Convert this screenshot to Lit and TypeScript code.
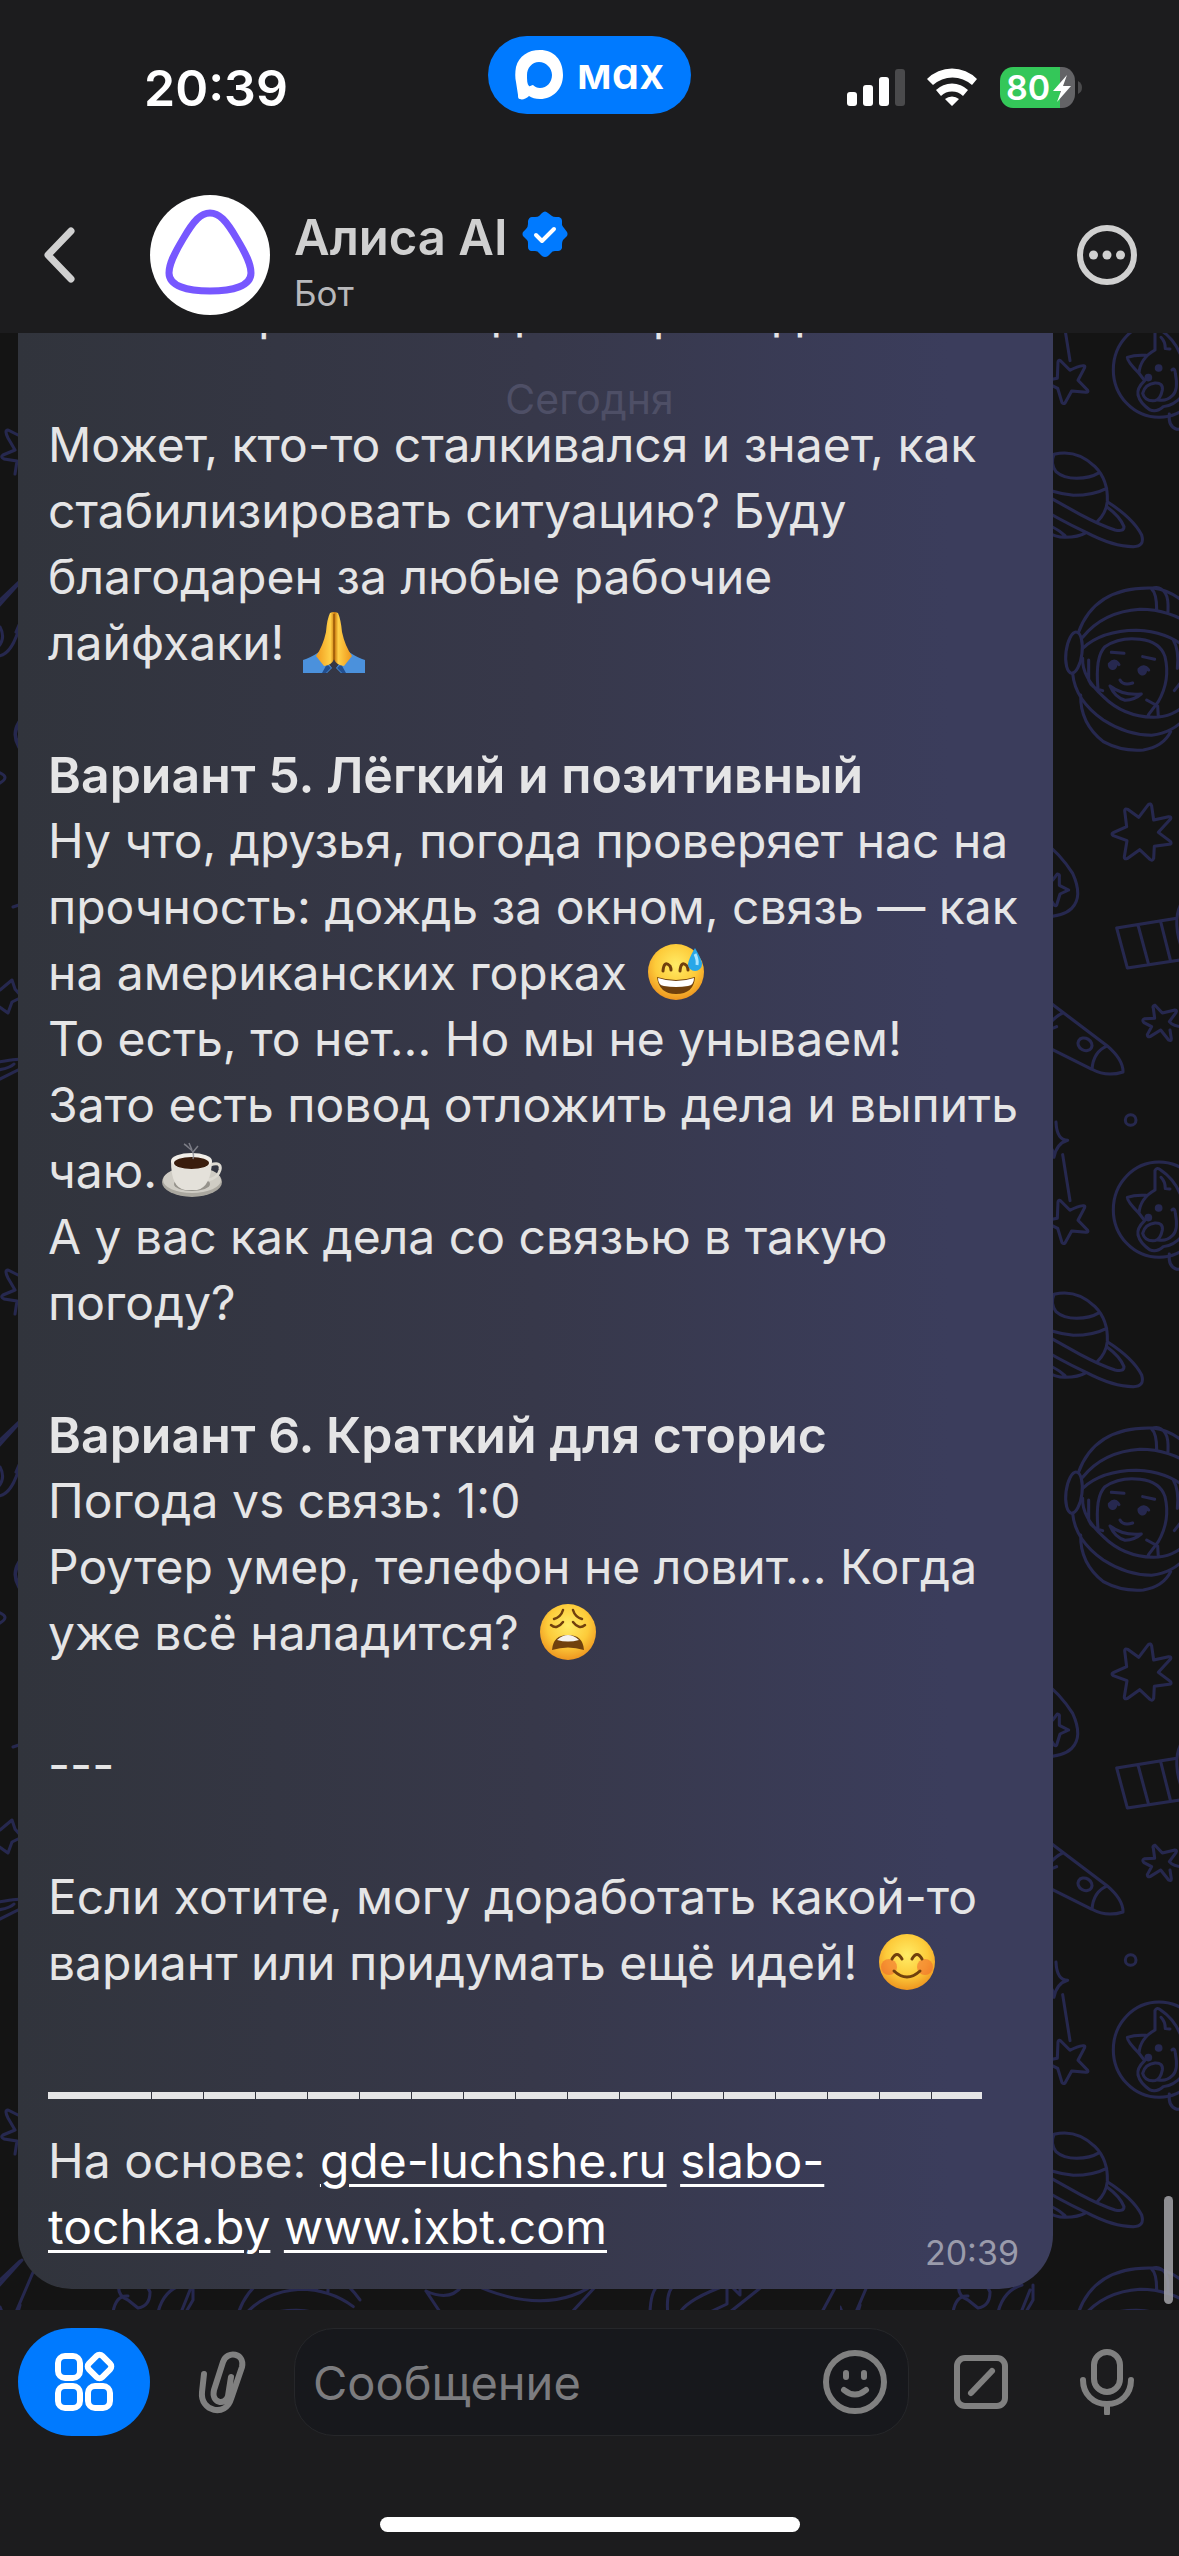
import { LitElement, html, css, svg } from "lit";
import { customElement } from "lit/decorators.js";

const star5 = svg`<path d="M60 122L90 152Q112 140 130 138Q136 138 134 144L114 182L143 212Q146 218 138 218L95 214L75 250Q70 254 66 249L53 206L20 190Q14 186 20 182L52 176L54 128Q55 120 60 122Z"/>`;

@customElement("space-wallpaper")
export class SpaceWallpaper extends LitElement {
  static styles = css`
    :host { display: block; }
    .canvas { display: block; width: 100%; height: 100%; }
    .ink { fill: none; stroke: #26284f; stroke-width: 9; stroke-linecap: round; stroke-linejoin: round; }
    .thin { stroke-width: 3; }
    .dot { fill: #26284f; }
  `;

  render() {
    return html`<svg class="canvas" aria-hidden="true">
      <defs>
        <pattern id="space" patternUnits="userSpaceOnUse" x="840" y="-63" width="840" height="840">
          <g class="ink" transform="translate(-840 -270)">
            <g transform="translate(1040 -40) scale(.3333)">
              <circle cx="272" cy="960" r="16"/>
              <path d="M48 966Q50 1020 83 1021Q50 1030 42 1072Q40 1035 5 1025M68 1064L90 1202"/>
              <g transform="translate(0 1079)">${star5}</g>
              <ellipse cx="357" cy="1229" rx="137" ry="143"/>
              <path d="M345 1170L345 1112Q350 1100 362 1110Q400 1135 420 1180M345 1170Q300 1195 297 1240Q262 1205 262 1192Q285 1184 318 1186M297 1240L314 1262Q290 1285 294 1305Q300 1330 330 1350Q350 1358 370 1340Q400 1338 430 1305M396 1230Q405 1222 406 1240Q416 1290 398 1306Q380 1325 355 1320M308 1300Q315 1272 345 1269Q370 1268 367 1290Q362 1318 345 1322Q315 1325 308 1300ZM363 1132Q376 1145 376 1166L390 1167M388 1362Q384 1400 410 1408H430"/>
              <circle class="dot" cx="356" cy="1224" r="7"/><circle class="dot" cx="325" cy="1253" r="7"/>
            </g>
            <g transform="translate(1040 320) scale(.3333)">
              <path d="M-30 500Q-40 415 42 403Q110 386 165 440Q205 480 202 545Q198 580 172 605M42 403Q30 430 48 455Q70 475 110 475Q150 475 178 458M-20 490Q40 520 100 526Q160 526 200 505M202 545Q280 595 305 645Q315 680 280 680Q220 680 140 638Q50 595 -30 545M202 562Q240 590 252 620Q252 636 225 630Q180 615 120 583L-20 505M-20 590Q15 650 75 652Q115 652 138 638M-10 605Q45 618 75 647"/>
              <path d="M115 938Q165 798 340 804Q420 815 480 900M128 952Q190 875 300 868Q390 868 460 920M128 985Q185 932 290 931Q380 934 440 985M350 868Q350 820 334 806Q360 795 376 820Q386 835 384 874"/>
              <ellipse cx="102" cy="998" rx="24" ry="62" transform="rotate(7 102 998)"/>
              <path d="M128 1015Q125 1070 190 1130Q250 1190 340 1192Q400 1192 440 1150M98 1060Q105 1140 190 1200Q260 1245 335 1246Q400 1238 440 1190M122 1125Q120 1210 190 1265Q245 1295 310 1290Q370 1280 392 1235M146 1020L146 1080Q155 1105 188 1112M174 1106Q165 1010 195 980Q240 950 300 958Q360 965 375 1010Q392 1080 355 1145L325 1185M355 1190L353 1158L320 1140M400 960Q418 990 412 1045M420 1090L403 1112M214 997L252 1000M308 1010L344 1018M240 1080Q250 1098 278 1089M210 1098Q250 1128 304 1122Q285 1140 255 1141Q225 1133 210 1098Z"/>
              <path class="dot" d="M208 1032A10 12 0 1 0 228 1035Q230 1024 237 1034Q226 1014 208 1032ZM297 1048A10 12 0 1 0 317 1052Q320 1041 326 1050Q312 1032 297 1048Z"/>
            </g>
            <g transform="translate(1040 800) scale(.3333)">
              <path d="M296 52L325 14Q332 8 335 18L341 60L386 50Q396 50 391 58L355 97L392 125Q396 133 387 133L343 139L341 175Q338 184 330 178L299 149L261 176Q252 178 253 170L261 122L220 107Q212 102 220 98L260 80L254 32Q254 24 263 28Z"/>
              <path d="M0 115Q60 160 98 220Q130 290 95 325Q70 350 10 350M38 240L52 222Q60 222 58 232V256L86 270L60 282L50 315Q46 320 40 312L25 285"/>
              <path d="M230 384L410 355M230 384L262 504L420 480M294 375L325 490M362 365L392 484M430 300Q395 350 422 435"/>
              <path d="M345 616L367 639L405 630Q412 630 408 638L388 665Q400 680 430 680M345 616Q336 618 340 625L344 655L314 656Q304 660 312 668L335 680L322 704Q322 712 330 710L362 690L386 720Q394 725 394 716L390 690"/>
              <path d="M0 585L202 738Q250 780 249 816Q200 832 156 808L0 730M202 738Q160 755 156 808M70 638Q45 650 30 670M0 690Q30 690 50 680"/>
              <ellipse cx="135" cy="733" rx="22" ry="18" transform="rotate(30 135 733)"/>
            </g>
            <g class="thin">
              <path d="M860 436L848 430Q844 430 848 438L855 450L843 455Q840 457 844 459L857 461L855 474M835 605L860 581M840 627Q847 640 835 650M838 656Q852 655 860 625M870 710Q840 734 870 760M866 718Q845 734 866 750M838 772Q852 777 838 784M853 907L862 904M840 990L852 980L855 989L862 997L852 1002L848 1013L838 1006M838 1062Q862 1058 862 1060M838 1080L862 1068M838 1070Q850 1068 854 1064"/>
              <path d="M835 610L862 580M856 632L874 590M960 600Q955 615 968 620L978 628Q990 626 990 612L984 600M968 616Q956 615 953 632M1022 605Q1004 610 998 632M1033 605V620L1026 632M1022 630L1030 610M1266 611L1282 635M1266 611Q1290 622 1302 606M1310 603Q1390 640 1440 600M1412 632L1436 606M1490 635Q1490 610 1500 604M1508 635Q1505 610 1516 604M1520 632Q1530 618 1567 605M1567 605V624L1550 632M1580 608V615L1573 608M1570 632L1604 605M1662 632L1675 608"/>
            </g>
          </g>
        </pattern>
      </defs>
      <rect width="100%" height="100%" fill="url(#space)"/>
    </svg>`;
  }
}

type EmojiKind = "pray" | "sweat" | "coffee" | "weary" | "blush";

const faceBase = svg`
  <defs>
    <radialGradient id="skin" cx=".5" cy=".38" r=".62"><stop offset="0" stop-color="#ffec66"/><stop offset=".6" stop-color="#fdcb3a"/><stop offset="1" stop-color="#ee9520"/></radialGradient>
  </defs>
  <circle cx="32" cy="32" r="28" fill="url(#skin)"/>`;

const drawings = {
  pray: svg`
    <defs><linearGradient id="hand" x2="1"><stop offset="0" stop-color="#f09a1c"/><stop offset=".4" stop-color="#ffd048"/><stop offset=".52" stop-color="#c9790f"/><stop offset=".62" stop-color="#ffd048"/><stop offset="1" stop-color="#ee951b"/></linearGradient></defs>
    <path d="M1 50Q8 48 17 42L30 58Q27 61 25 63H1Z" fill="#4b91dc"/><path d="M63 50Q56 48 47 42L34 58Q37 61 39 63H63Z" fill="#4b91dc"/>
    <path d="M24 63L29 58L25 54L20 63ZM40 63L35 58L39 54L44 63Z" fill="#234f8f"/>
    <path d="M28 3Q32 1 36 3Q39 10 40 22Q43 36 50 46L42 56Q34 55 32 49Q30 55 22 56L14 46Q21 36 24 22Q25 9 28 3Z" fill="url(#hand)"/>
    <path d="M32 4V50" stroke="#9a5808" stroke-width="1.5"/>`,
  sweat: svg`${faceBase}
    <path d="M19 31Q20 20 26 26Q27 28 27 30M36 31Q37 20 43 26Q44 28 44 30" fill="none" stroke="#70400d" stroke-width="3" stroke-linecap="round"/>
    <path d="M13 37Q32 43 51 37Q50 54 32 54Q15 54 13 37Z" fill="#70400d"/><path d="M14 38Q32 44 50 38Q50 45 44 46Q32 48 20 46Q14 45 14 38Z" fill="#fff"/>
    <path d="M51 8Q58 20 58 24A7 7 0 0 1 44 24Q45 18 51 8Z" fill="#28a7e8"/><path d="M51 14Q54 20 53 25" fill="none" stroke="#a8e4ff" stroke-width="3"/>`,
  coffee: svg`
    <ellipse cx="31" cy="44" rx="30" ry="15" fill="#aaa79f"/><ellipse cx="31" cy="42" rx="29" ry="13" fill="#cfccc4"/><ellipse cx="31" cy="46" rx="18" ry="7" fill="#96938c"/>
    <path d="M49 27Q61 23 59 32Q57 40 47 42" fill="none" stroke="#dddad2" stroke-width="3"/>
    <path d="M10 23Q10 50 24 52H36Q50 49 51 23Z" fill="#e4e1da"/><ellipse cx="30.500" cy="23" rx="20.500" ry="8" fill="#f1eee8"/><ellipse cx="30.500" cy="25" rx="17.500" ry="6" fill="#3a1d0d"/>
    <path d="M32 21Q34 14 28 10Q25 7 23 6M32 14L37 8M31 12L28 5" fill="none" stroke="#8d8e96" stroke-width="1.500" opacity=".8"/>`,
  weary: svg`${faceBase}
    <path d="M18 19Q25 17 27 10M46 19Q39 17 37 10M15 25Q21 30 27 22M49 25Q43 30 37 22" fill="none" stroke="#70400d" stroke-width="2.500" stroke-linecap="round"/>
    <path d="M16 50Q17 35 32 35Q47 35 48 50Q32 45 16 50Z" fill="#70400d"/><path d="M21 40Q32 30 43 40Q32 43 21 40Z" fill="#f5f2ee"/>`,
  blush: svg`${faceBase}
    <circle cx="14" cy="37" r="8" fill="#f0642e" opacity=".55"/><circle cx="50" cy="37" r="8" fill="#f0642e" opacity=".55"/>
    <path d="M17 29Q22 20 27 29M37 29Q42 20 47 29M19 41Q32 53 45 41" fill="none" stroke="#70400d" stroke-width="3" stroke-linecap="round"/>`,
};

@customElement("emoji-glyph")
export class EmojiGlyph extends LitElement {
  static properties = { kind: {} };
  declare kind: EmojiKind;
  static styles = css`
    :host { display: inline-block; width: 64px; height: 64px; margin-left: 4px; vertical-align: -14px; line-height: 0; }
    .art { display: block; width: 64px; height: 64px; }
  `;
  render() {
    return html`<svg class="art" viewBox="0 0 64 64" aria-hidden="true">${drawings[this.kind]}</svg>`;
  }
}

@customElement("status-bar")
export class StatusBar extends LitElement {
  static styles = css`
    :host { display: grid; grid-template-columns: 1fr auto 1fr; align-items: start; height: 141px; padding-top: 36px; }
    .time { margin-left: 144px; color: #fff; font-size: 50px; font-weight: 600; line-height: 104px; }
    .island { display: flex; align-items: center; gap: 14px; height: 78px; padding: 0 27px; border-radius: 39px; background: #007aff; color: #fff; font-size: 44px; font-weight: 600; line-height: 70px; }
    .brand { padding-bottom: 4px; }
    .logo { width: 48px; height: 50px; }
    .signals { justify-self: end; margin: 28px 96px 0 0; width: 237px; height: 48px; }
    .level { fill: #fff; font-size: 34px; font-weight: 600; }
  `;
  render() {
    return html`
      <span class="time">20:39</span>
      <span class="island">
        <svg class="logo" viewBox="0 0 48 50" aria-hidden="true">
          <path fill="#fff" fill-rule="evenodd" d="M25 0C39 0 48 10 48 25C48 39 38 49 25 49C20 49 17 48 14 46C11 49 7 50 5 49C3 49 3 47 3 45L1 32C0 28 0 22 1 17C4 6 13 0 25 0ZM24 12C17 12 12 18 12 25C12 30 12 34 14 36C15 37 16 35 18 35C20 37 22 38 25 38C32 38 37 32 37 25C37 18 31 12 24 12Z"/>
        </svg>
        <span class="brand">мɑx</span>
      </span>
      <svg class="signals" viewBox="845 64 237 48" role="img" aria-label="Связь и заряд">
        <g fill="#fff">
          <rect x="846" y="92" width="10" height="14" rx="3"/><rect x="862" y="85" width="10" height="21" rx="3"/><rect x="878" y="77" width="10" height="29" rx="3"/>
          <rect x="894" y="69" width="10" height="37" rx="3" fill="#4a4a4c"/>
          <path d="M926 79A35 35 0 0 1 976 79L971 85A29 29 0 0 0 932 85ZM935 90A23 23 0 0 1 967 90L962 96A16 16 0 0 0 940 96ZM944 99A11 11 0 0 1 958 99L951 106Z"/>
        </g>
        <path d="M1059 67H1061A13 14 0 0 1 1074 81V94A13 14 0 0 1 1061 108H1059Z" fill="#636366"/>
        <path d="M1059 67H1012A13 14 0 0 0 999 81V94A13 14 0 0 0 1012 108H1059Z" fill="#34c759"/>
        <path d="M1077 81Q1081 83 1081 87.500Q1081 92 1077 94Z" fill="#4a4a4c"/>
        <text class="level" x="1005" y="100">80</text>
        <path d="M1066 75L1052 91H1060L1056 102L1070 86H1062Z" fill="#fff"/>
      </svg>`;
  }
}

@customElement("chat-header")
export class ChatHeader extends LitElement {
  static styles = css`
    :host { display: flex; align-items: center; height: 156px; padding-right: 18px; }
    .icon-button { display: grid; place-items: center; padding: 0; border: 0; background: none; color: #d0d0d0; width: 108px; height: 108px; }
    .back { width: 120px; }
    .icon { width: 60px; height: 60px; fill: none; stroke: currentColor; stroke-width: 6; stroke-linecap: round; stroke-linejoin: round; }
    .avatar { width: 120px; height: 120px; margin-left: 30px; }
    .names { flex: 1; padding: 16px 0 0 24px; }
    .title { display: flex; align-items: center; gap: 14px; margin: 0; color: #d0d0d0; font-size: 49px; font-weight: 600; line-height: 60px; }
    .badge { width: 46px; height: 46px; margin-bottom: 8px; }
    .sub { margin: 0; color: #b8b8bb; font-size: 35px; line-height: 50px; }
  `;
  render() {
    return html`
      <button class="icon-button back" aria-label="Назад">
        <svg class="icon" viewBox="0 0 60 60"><path stroke-width="7" d="M41 6L18 30L41 54"/></svg>
      </button>
      <svg class="avatar" viewBox="0 0 120 120" aria-hidden="true">
        <circle cx="60" cy="60" r="60" fill="#fff"/>
        <path d="M60 18C69 18 76 25 87 44C96 59 101 69 101 78C101 91 83 96 60 96C37 96 19 91 19 78C19 69 24 59 33 44C44 25 51 18 60 18Z" fill="none" stroke="#7757ff" stroke-width="7"/>
      </svg>
      <div class="names">
        <h1 class="title">Алиса AI
          <svg class="badge" viewBox="0 0 46 46" role="img" aria-label="Подтверждён">
            <path d="M20 2Q23-1 26 2L30 5Q31 6 34 6L37 6Q40 7 40 10V14Q41 16 42 17L45 21Q46 23 45 25L41 29Q40 31 40 33V37Q39 40 36 40H33Q30 40 29 42L26 45Q23 47 20 45L17 42Q16 40 13 40H9Q6 39 6 36V32Q6 30 5 29L1 25Q0 23 1 21L4 18Q6 16 6 13V10Q7 6 10 6H13Q16 6 17 5Z" fill="#007aff"/>
            <path d="M14 24L20 30L32 18" fill="none" stroke="#fff" stroke-width="4" stroke-linecap="round" stroke-linejoin="round"/>
          </svg>
        </h1>
        <p class="sub">Бот</p>
      </div>
      <button class="icon-button" aria-label="Ещё">
        <svg class="icon" viewBox="0 0 60 60"><circle cx="30" cy="30" r="27"/><g fill="currentColor" stroke="none"><circle cx="16.500" cy="30" r="4.500"/><circle cx="30" cy="30" r="4.500"/><circle cx="43.500" cy="30" r="4.500"/></g></svg>
      </button>`;
  }
}

@customElement("bot-message")
export class BotMessage extends LitElement {
  static styles = css`
    :host { display: block; flex: none; margin: 0 126px 21px 18px; padding: 0 30px 29px; border-radius: 54px; background: linear-gradient(90deg, #31343c, #37384a 50%, #3b3d5c 90%); color: #e5e5e6; font-size: 48px; line-height: 66px; white-space: nowrap; }
    .block { margin: 0 0 66px; }
    .last { margin: 0; }
    .heading { margin: 0; font-size: 50px; font-weight: 600; line-height: 66px; }
    .rule { height: 66px; display: flex; align-items: center; }
    .dashes { width: 934px; height: 7px; background: repeating-linear-gradient(90deg, #e5e5e6 0 51px, #33353f 51px 52px); }
    .dashes::before { content: ""; display: block; width: 102px; height: 7px; background: #e5e5e6; }
    .link { color: #fff; text-decoration: underline; text-decoration-thickness: 3px; text-underline-offset: 6px; }
    .time { float: right; margin: 38px 4px -14px 0; color: #9a9bab; font-size: 34px; line-height: 41px; }
  `;
  render() {
    return html`
      <p class="block">Как вечер сложно даже треть дома</p>
      <p class="block">Может, кто-то сталкивался и знает, как<br>стабилизировать ситуацию? Буду<br>благодарен за любые рабочие<br>лайфхаки! <emoji-glyph kind="pray"></emoji-glyph></p>
      <h2 class="heading">Вариант 5. Лёгкий и позитивный</h2>
      <p class="block">Ну что, друзья, погода проверяет нас на<br>прочность: дождь за окном, связь — как<br>на американских горках <emoji-glyph kind="sweat"></emoji-glyph><br>То есть, то нет... Но мы не унываем!<br>Зато есть повод отложить дела и выпить<br>чаю.<emoji-glyph kind="coffee"></emoji-glyph><br>А у вас как дела со связью в такую<br>погоду?</p>
      <h2 class="heading">Вариант 6. Краткий для сторис</h2>
      <p class="block">Погода vs связь: 1:0<br>Роутер умер, телефон не ловит... Когда<br>уже всё наладится? <emoji-glyph kind="weary"></emoji-glyph></p>
      <p class="block">---</p>
      <p class="block">Если хотите, могу доработать какой-то<br>вариант или придумать ещё идей! <emoji-glyph kind="blush"></emoji-glyph></p>
      <div class="rule"><div class="dashes"></div></div>
      <p class="last">На основе: <a class="link" href="https://gde-luchshe.ru">gde-luchshe.ru</a> <a class="link" href="https://slabo-tochka.by">slabo-<br>tochka.by</a> <a class="link" href="https://www.ixbt.com">www.ixbt.com</a><time class="time">20:39</time></p>`;
  }
}

@customElement("message-composer")
export class MessageComposer extends LitElement {
  static styles = css`
    :host { display: block; padding: 18px 18px 24px; background: #1c1c1e; }
    .row { display: flex; align-items: center; }
    .apps { display: grid; place-items: center; width: 132px; height: 108px; padding: 0; border: 0; border-radius: 54px; background: #007aff; color: #fff; }
    .tool { display: grid; place-items: center; width: 144px; height: 108px; padding: 0; border: 0; background: none; color: #808080; }
    .narrow { width: 108px; }
    .icon { width: 66px; height: 66px; fill: none; stroke: currentColor; stroke-width: 6; stroke-linecap: round; stroke-linejoin: round; }
    .field { flex: 1; min-width: 0; display: flex; align-items: center; box-sizing: border-box; height: 108px; border: 1px solid #26272a; border-radius: 40px; background: #17181c; }
    .input { flex: 1; min-width: 0; padding: 0 0 0 18px; border: 0; outline: 0; background: none; color: #e5e5e6; font: inherit; font-size: 47px; }
    .input::placeholder { color: #7c7c7f; opacity: 1; }
    .emoji { width: 106px; height: 106px; }
    .home { width: 420px; height: 15px; margin: 81px auto 0; border-radius: 8px; background: #fff; }
  `;
  render() {
    return html`
      <div class="row">
        <button class="apps" aria-label="Приложения">
          <svg class="icon" viewBox="0 0 66 66"><rect x="7" y="7" width="22" height="22" rx="7"/><rect x="7" y="37" width="22" height="22" rx="7"/><rect x="37" y="37" width="22" height="22" rx="7"/><rect x="39" y="8" width="19" height="19" rx="4" transform="rotate(45 48.500 17.500)"/></svg>
        </button>
        <button class="tool" aria-label="Прикрепить файл">
          <svg class="icon" viewBox="0 0 66 66"><path d="M15 25L13 43C11 63 37 68 42 50L53 18C56 4 38 1 34 13L25 41C22 54 36 57 39 47L42 28"/></svg>
        </button>
        <div class="field">
          <input class="input" type="text" placeholder="Сообщение" aria-label="Сообщение">
          <button class="tool emoji" aria-label="Эмодзи">
            <svg class="icon" viewBox="0 0 66 66"><circle cx="33" cy="33" r="29"/><path d="M24 24V28M42 24V28M22 41Q33 50 44 41"/></svg>
          </button>
        </div>
        <button class="tool" aria-label="Команды">
          <svg class="icon" viewBox="0 0 66 66"><rect x="9" y="9" width="48" height="48" rx="8"/><path d="M23 44L44 22"/></svg>
        </button>
        <button class="tool narrow" aria-label="Голосовое сообщение">
          <svg class="icon" viewBox="0 0 66 66"><rect x="20" y="3" width="26" height="40" rx="13"/><path d="M9 31C9 45 19 55 33 55C47 55 57 45 57 31M33 55V64"/></svg>
        </button>
      </div>
      <div class="home"></div>`;
  }
}

@customElement("app-root")
export class AppRoot extends LitElement {
  static styles = css`
    :host { display: flex; flex-direction: column; height: 100vh; overflow: hidden; background: #1c1c1e; font-family: Inter, Roboto, "Noto Sans", sans-serif; }
    .chat { position: relative; flex: 1; min-height: 0; display: flex; flex-direction: column; justify-content: flex-end; overflow: hidden; background: #141414; }
    .wallpaper { position: absolute; inset: 0; }
    .message { position: relative; }
    .day { position: absolute; top: 36px; left: 0; right: 0; color: #4e4f66; font-size: 41px; line-height: 60px; text-align: center; }
    .thumb { position: absolute; right: 6px; bottom: 6px; width: 9px; height: 108px; border-radius: 5px; background: #a3a3a8; opacity: 0.85; }
  `;
  render() {
    return html`
      <status-bar></status-bar>
      <chat-header></chat-header>
      <main class="chat">
        <space-wallpaper class="wallpaper"></space-wallpaper>
        <bot-message class="message"></bot-message>
        <div class="day">Сегодня</div>
        <div class="thumb"></div>
      </main>
      <message-composer></message-composer>`;
  }
}
